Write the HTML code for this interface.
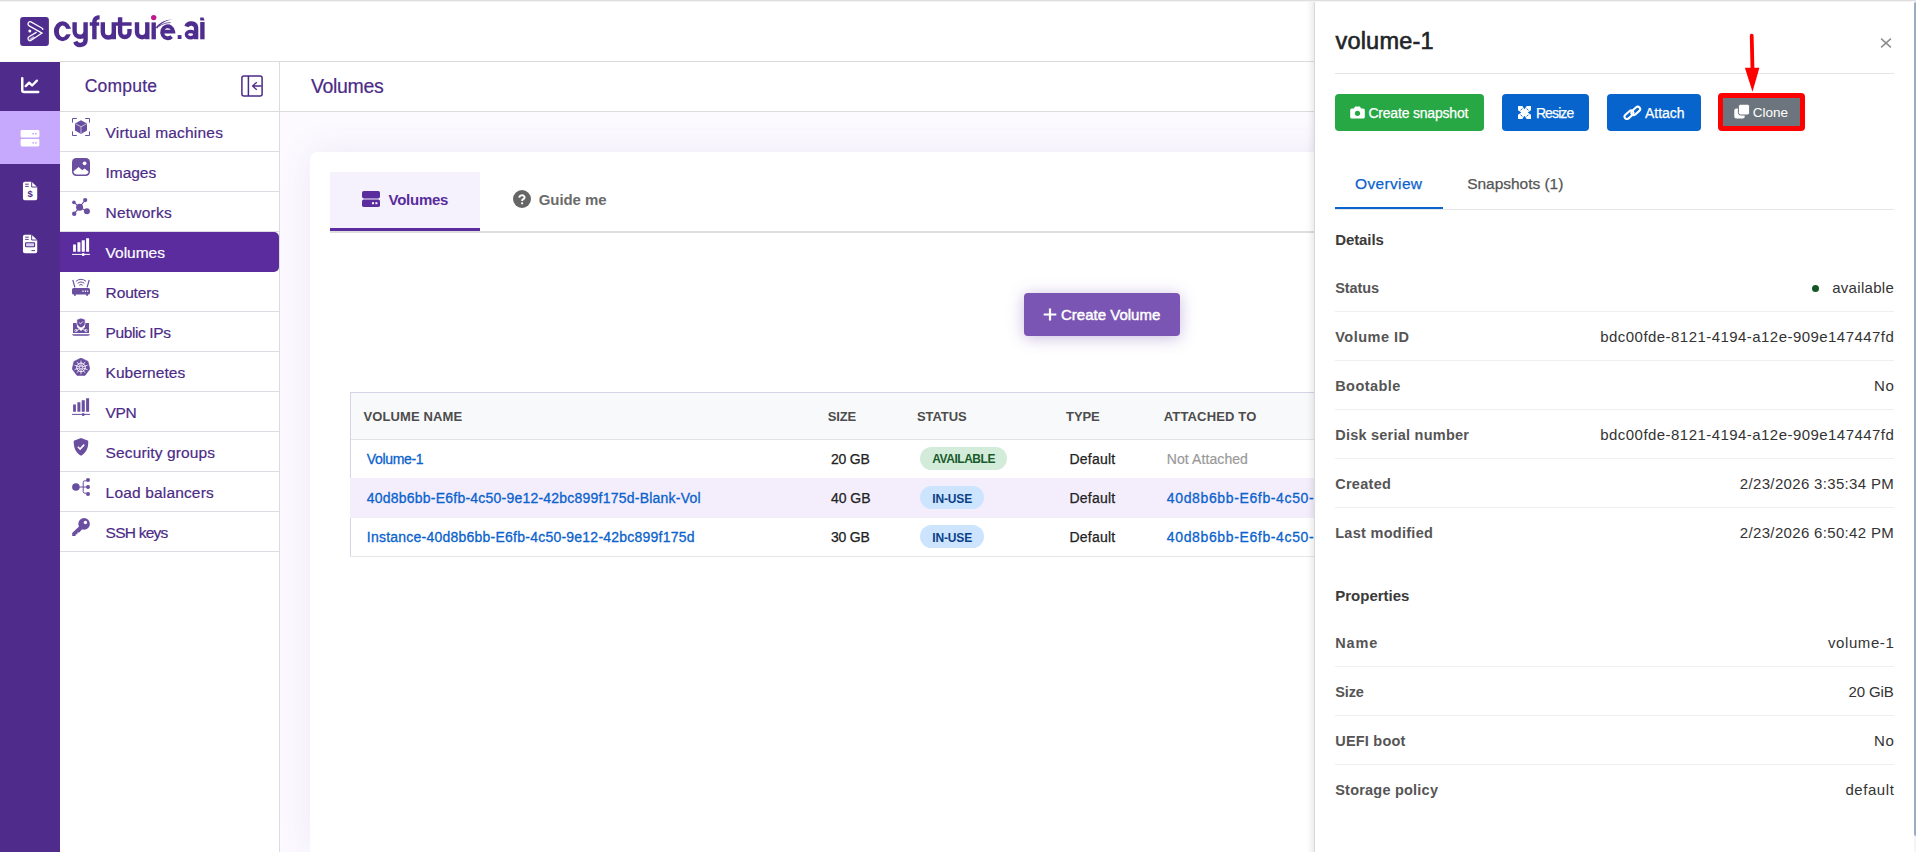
<!DOCTYPE html>
<html lang="en">
<head>
<meta charset="utf-8">
<title>Volumes - cyfuture.ai</title>
<style>
*{box-sizing:border-box;margin:0;padding:0}
html,body{width:1916px;height:852px;overflow:hidden;background:#fff}
body{font-family:"Liberation Sans",sans-serif;position:relative;color:#4c2b87}
.abs,.t,svg.i{position:absolute}
.t{white-space:pre;display:block}
a.t{text-decoration:none}
#topline{left:0;top:0;width:1916px;height:1px;background:#dedfdd;border-bottom:0;box-shadow:0 1px 0 #f4f4f4}
#topbar{left:0;top:0;width:1916px;height:62px;background:#fff;border-bottom:1px solid #dcdcde}
#rail{left:0;top:62px;width:60px;height:790px;background:#4f2c8b}
#railact{left:0;top:111px;width:60px;height:53px;background:#c6a8fd}
#side{left:60px;top:62px;width:220px;height:790px;background:#fff;border-right:1px solid #dcdcde}
#sidehead{left:60px;top:62px;width:219px;height:50px;border-bottom:1px solid #dcdcde}
.srow{position:absolute;left:60px;width:219px;height:40px;border-bottom:1px solid #dddbe4}
.srow.act{background:#5a2c9d;border-bottom:none;border-radius:0 5px 5px 0;height:40px}
#mainhead{left:280px;top:62px;width:1636px;height:50px;background:#fff;border-bottom:1px solid #dcdcde}
#mainbg{left:280px;top:112px;width:1636px;height:740px;background:#fcfaff}
#card{left:310px;top:152px;width:1606px;height:700px;background:#fff;border-radius:8px 0 0 0;box-shadow:0 0 36px rgba(90,60,160,.09)}
#tabact{left:330px;top:172px;width:150px;height:56px;background:#f5f1fd}
#tabul{left:330px;top:228px;width:150px;height:3px;background:#5a2c9d}
#tabline{left:330px;top:231px;width:1586px;height:2px;background:#dedede}
#cbtn{left:1024px;top:293px;width:156px;height:43px;background:#7b55b4;border-radius:4px;box-shadow:0 2px 16px rgba(105,70,170,.36)}
#tbl{left:350px;top:392px;width:1566px;height:165px;border:1px solid #d8d2e8;border-bottom-color:#e6e6e8;border-right:none;background:#fff}
#thead{left:351px;top:393px;width:1565px;height:46px;background:#f8f9fa}
.hl{position:absolute;left:351px;width:1565px;height:1px;background:#e3e3e6}
#row2{left:350px;top:478px;width:1566px;height:39.5px;background:#f4eefc}
.badge{position:absolute;height:23px;border-radius:12px}
#panelshadow{left:1306px;top:2px;width:8px;height:850px;background:linear-gradient(to right,rgba(0,0,0,0),rgba(0,0,0,.025) 45%,rgba(0,0,0,.075))}
#panel{left:1314px;top:2px;width:602px;height:850px;background:#fff;border-left:1px solid #d9d9dc}
.pl{position:absolute;left:1335px;width:559px;height:1px;background:#efefef}
.btn{position:absolute;top:94px;height:37px;border-radius:4px}
#sbt{left:1914px;top:2px;width:2px;height:850px;background:#f4f5f9}
#sb{left:1913.8px;top:2px;width:2.2px;height:833.5px;background:#9dabc2;border-radius:2px 0 0 2px}
</style>
</head>
<body>
<header>
<div class="abs" id="topbar"></div>
<div class="abs" id="topline"></div>
<div class="abs" style="left:0;top:61px;width:60px;height:1px;background:#f7f7f3"></div>
<svg class="i" style="left:0px;top:0px" width="220" height="60" viewBox="0 0 220 60" >
<rect x="20.1" y="16.9" width="28.8" height="29" rx="3" fill="#4f2d8e"/>
<path d="M29.2 38.9 L33.6 36.1 L35 38 L30.6 40.6 A2.1 2.1 0 0 1 29.2 38.9z" fill="#bfa8e4"/>
<path d="M42.7 29.9 V28.5 L31 21.9 A2.2 2.2 0 0 0 29.2 25.9 L42 33.1 L30.6 40.7 A2.15 2.15 0 0 1 28.7 37 L36.6 32.1" stroke="#fff" stroke-width="1.25" fill="none" stroke-linejoin="miter"/>
<circle cx="29.8" cy="31.1" r="1.5" fill="#fff"/>
<g fill="none" stroke="#4f2d8e" stroke-width="4.4">
<path d="M74.6 22.3 V31.3 A5.5 5.5 0 0 0 85.6 31.3 M85.6 22.3 V39.8 A5.4 5.4 0 0 1 75.2 41.6"/>
<path d="M94.4 39.3 V21.6 A4.2 4.2 0 0 1 98.6 17.4 H99.6"/>
<path d="M102.8 22.2 V32 A5.5 5.5 0 0 0 113.8 32 M113.8 22.2 V39.3"/>
<path d="M120.1 17.2 V32.3 A4.7 4.7 0 0 0 129.5 32.3 V29"/>
<path d="M137 22.2 V32.1 A5.15 5.15 0 0 0 147.3 32.1 M147.3 22.2 V39.3"/>
<path d="M153.7 22.4 V39.3"/>
<path d="M162.2 31.6 H173.3 A5.6 6 0 1 0 171.6 36.6" stroke-width="3.8"/>
<path d="M186.4 26.6 A5 4.6 0 0 1 196.1 27.6 V39.3" />
<ellipse cx="190.6" cy="34.6" rx="4.2" ry="3.1" stroke-width="3.4"/>
<path d="M202.4 22 V39.3"/>
</g>
<path fill-rule="evenodd" fill="#4f2d8e" d="M53.9 31.25 A8.6 10.05 0 1 0 71.1 31.25 A8.6 10.05 0 1 0 53.9 31.25z M58.9 31.4 A3.85 5.8 0 1 0 66.6 31.4 A3.85 5.8 0 1 0 58.9 31.4z"/><rect x="62.7" y="28.8" width="9.4" height="5.5" fill="#fff"/>
<path d="M89.7 24 H99.2 M116 24 H131.6" stroke="#4f2d8e" stroke-width="3.5" fill="none"/>
<rect x="177.7" y="35.1" width="3.8" height="3.9" fill="#4f2d8e"/>
<path d="M200.2 17.6 L203.4 17.4 L204.6 20.6 L200.2 20.6z" fill="#4f2d8e"/>
<path d="M155.9 27.2 C160 22.4 166 19.4 173.4 19.6 C167 20.2 161.5 22.8 157 28.8z" fill="#4f2d8e"/>
<path d="M158.8 26.4 C162.5 23.8 166.4 22.6 170.6 22.6" stroke="#4f2d8e" stroke-width=".8" fill="none"/>
<circle cx="153.7" cy="17.6" r="2.7" fill="#c2188a"/>
</svg>
</header>
<nav aria-label="sections">
<div class="abs" id="rail"></div>
<div class="abs" id="railact"></div>
<svg class="i" style="left:20px;top:76px" width="21" height="19" viewBox="0 0 21 19" ><path d="M2.25 2.2 V14.3 A1.8 1.8 0 0 0 4.05 16.1 H18.2" stroke="#fff" stroke-width="2.5" fill="none" stroke-linecap="round"/><path d="M5.7 10.1 L9.2 6.7 L12.1 9.5 L16.9 4.7" stroke="#fff" stroke-width="2.4" fill="none" stroke-linecap="round" stroke-linejoin="round"/></svg><svg class="i" style="left:20px;top:129px" width="20" height="19" viewBox="0 0 20 19" ><rect x=".6" y="1" width="18.8" height="7.4" rx="1.4" fill="#fff"/><rect x=".6" y="10.1" width="18.8" height="7.4" rx="1.4" fill="#fff"/><g fill="#c4a6fb"><circle cx="13.2" cy="4.7" r=".9"/><circle cx="15.9" cy="4.7" r=".9"/><circle cx="13.2" cy="13.8" r=".9"/><circle cx="15.9" cy="13.8" r=".9"/></g></svg><svg class="i" style="left:22px;top:181.3px" width="16.8" height="20" viewBox="0 0 16 20" preserveAspectRatio="none" aria-hidden="true"><path d="M2.6 .7 H9.2 L14.5 6 V17.6 A1.7 1.7 0 0 1 12.8 19.3 H2.6 A1.7 1.7 0 0 1 .9 17.6 V2.4 A1.7 1.7 0 0 1 2.6 .7z" fill="#fff"/><path d="M9.2 .7 V6 H14.5" fill="none" stroke="#4f2c8b" stroke-width=".9"/><path d="M3 3.2 H6.4 M3 5.4 H6.4" stroke="#4f2c8b" stroke-width=".9"/><text x="7.7" y="16.2" font-size="9" font-weight="700" text-anchor="middle" fill="#4f2c8b" font-family="Liberation Sans">$</text></svg><svg class="i" style="left:22px;top:233.9px" width="16.8" height="20" viewBox="0 0 16 20" preserveAspectRatio="none"><path d="M2.6 .7 H9.2 L14.5 6 V17.6 A1.7 1.7 0 0 1 12.8 19.3 H2.6 A1.7 1.7 0 0 1 .9 17.6 V2.4 A1.7 1.7 0 0 1 2.6 .7z" fill="#fff"/><path d="M9.2 .7 V6 H14.5" fill="none" stroke="#4f2c8b" stroke-width=".9"/><path d="M3 3.2 H6.4 M3 5.4 H6.4 M9 16.6 H12.4" stroke="#4f2c8b" stroke-width=".9"/><rect x="3.4" y="8.8" width="8.6" height="4" rx=".6" fill="#d9cdf0" stroke="#4f2c8b" stroke-width="1"/></svg>
</nav>
<nav aria-label="compute">
<div class="abs" id="side"></div>
<div class="abs" id="sidehead"></div>
<span class="t" style="top:74.91px;font-size:17.5px;line-height:22px;left:84.70px;letter-spacing:0.212px;color:#4c2b87;-webkit-text-stroke:.2px #4c2b87;">Compute</span>
<svg class="i" style="left:241px;top:75px" width="22" height="22" viewBox="0 0 22 22" ><rect x=".9" y=".9" width="20.2" height="20.2" rx="2" fill="none" stroke="#4c2b87" stroke-width="1.5"/><path d="M7.4 1 V21" stroke="#4c2b87" stroke-width="1.5"/><path d="M20.6 11 H11.8 M15.8 7.2 L11.6 11 L15.8 14.8" stroke="#4c2b87" stroke-width="1.3" fill="none"/></svg>
<div class="srow" style="top:112px"></div><svg class="i" style="left:72px;top:118px" width="18" height="18" viewBox="0 0 18 18" ><path d="M.5 4.6 V.5 H4.8 M13.2 .5 H17.5 V4.6 M17.5 13.4 V17.5 H13.2 M4.8 17.5 H.5 V13.4" fill="none" stroke="#6a4ea0" stroke-width="1"/><path d="M9 2.2 L15 5.4 V12.6 L9 16 L3 12.6 V5.4z" fill="#6a4ea0"/><path d="M3.4 5.8 L9 8.8 L14.6 5.8 M9 8.8 V15.6" stroke="#fff" stroke-width=".8" fill="none" opacity=".75"/></svg><a class="t" style="top:122.91px;font-size:15.5px;line-height:19px;left:105.60px;letter-spacing:0.199px;color:#4c2b87;-webkit-text-stroke:.2px #4c2b87;">Virtual machines</a>
<div class="srow" style="top:152px"></div><svg class="i" style="left:72px;top:158px" width="18" height="18" viewBox="0 0 18 18" ><rect x="0" y="0" width="18" height="18" rx="4.2" fill="#6a4ea0"/><circle cx="12.6" cy="5.3" r="1.9" fill="#fff"/><path d="M1.3 13.6 L6.6 8.9 L10.3 12.3 L12.6 10.6 L16.7 13.8 A3.2 3.2 0 0 1 13.8 16.4 H4.2 A3.2 3.2 0 0 1 1.3 13.6z" fill="#fff"/></svg><a class="t" style="top:162.91px;font-size:15.5px;line-height:19px;left:105.60px;letter-spacing:-0.057px;color:#4c2b87;-webkit-text-stroke:.2px #4c2b87;">Images</a>
<div class="srow" style="top:192px"></div><svg class="i" style="left:72px;top:198px" width="18" height="18" viewBox="0 0 18 18" ><path d="M7.6 9.2 L13.2 2 M7.6 9.2 L1.9 4.4 M7.6 9.2 L14.9 13.2 M7.6 9.2 L2.1 15.8" stroke="#6a4ea0" stroke-width="1.1"/><circle cx="7.6" cy="9.2" r="3.5" fill="#6a4ea0"/><circle cx="13.2" cy="2.1" r="2.1" fill="#6a4ea0"/><circle cx="1.9" cy="4.4" r="1.8" fill="#6a4ea0"/><circle cx="14.9" cy="13.2" r="3" fill="#6a4ea0"/><circle cx="2.2" cy="15.8" r="2.2" fill="#6a4ea0"/></svg><a class="t" style="top:202.91px;font-size:15.5px;line-height:19px;left:105.60px;letter-spacing:0.211px;color:#4c2b87;-webkit-text-stroke:.2px #4c2b87;">Networks</a>
<div class="srow act" style="top:232px"></div><svg class="i" style="left:72px;top:238px" width="18" height="18" viewBox="0 0 18 18" ><path d="M1.1 6.4 H3.9 V13.7 H1.1z M5.4 4.2 H8.4 V13.7 H5.4z M9.7 2.2 H12.8 V13.7 H9.7z M14.1 .3 H17.1 V13.7 H14.1z" fill="#fff"/><path d="M0 16.4 H18" stroke="#fff" stroke-width="1"/><circle cx="11.2" cy="16.4" r="1.5" fill="#fff"/></svg><a class="t" style="top:242.91px;font-size:15.5px;line-height:19px;left:105.60px;letter-spacing:-0.022px;color:#fff;-webkit-text-stroke:.2px #fff;">Volumes</a>
<div class="srow" style="top:272px"></div><svg class="i" style="left:72px;top:278px" width="18" height="18" viewBox="0 0 18 18" ><rect x="0" y="10" width="18" height="6.6" rx="1.6" fill="#6a4ea0"/><path d="M2 16 V17.8 H3.8 V16 M14.2 16 V17.8 H16 V16" fill="#6a4ea0"/><path d="M.8 2 L2.9 9.4 M17.2 2 L15.1 9.4" stroke="#6a4ea0" stroke-width="1.2"/><path d="M3.9 3.4 A7.3 7.3 0 0 1 14.1 3.4 M5.6 5.4 A4.9 4.9 0 0 1 12.4 5.4 M7.2 7.3 A2.6 2.6 0 0 1 10.8 7.3" fill="none" stroke="#6a4ea0" stroke-width="1"/><path d="M10.4 13.3 H11.6 M12.9 13.3 H14.1 M15.2 13.3 H16.2" stroke="#fff" stroke-width="1.6"/></svg><a class="t" style="top:282.91px;font-size:15.5px;line-height:19px;left:105.60px;letter-spacing:-0.140px;color:#4c2b87;-webkit-text-stroke:.2px #4c2b87;">Routers</a>
<div class="srow" style="top:312px"></div><svg class="i" style="left:72px;top:318px" width="18" height="18" viewBox="0 0 18 18" ><path d="M1 5 H5 V9 L9 13 L13 9 V5 H17 V14.9 H1z" fill="#6a4ea0"/><path d="M0 16.3 H18 A2 1.6 0 0 1 16 17.7 H2 A2 1.6 0 0 1 0 16.3z" fill="#6a4ea0"/><path d="M9 0 L13.2 1.5 V5 C13.2 7.4 11.4 9 9 9.9 C6.6 9 4.8 7.4 4.8 5 V1.5z" fill="#6a4ea0" stroke="#fff" stroke-width=".7"/><path d="M7.2 4.6 L8.5 5.9 L10.9 3.5" stroke="#fff" stroke-width=".9" fill="none"/><path d="M4 12.6 L7.2 11.4 M14 12.6 L10.8 11.4" stroke="#fff" stroke-width=".8"/><circle cx="4" cy="12.6" r="1.2" fill="none" stroke="#fff" stroke-width=".7"/><circle cx="14" cy="12.6" r="1.2" fill="none" stroke="#fff" stroke-width=".7"/></svg><a class="t" style="top:322.91px;font-size:15.5px;line-height:19px;left:105.60px;letter-spacing:-0.402px;color:#4c2b87;-webkit-text-stroke:.2px #4c2b87;">Public IPs</a>
<div class="srow" style="top:352px"></div><svg class="i" style="left:72px;top:358px" width="18" height="18" viewBox="0 0 18 18" ><path d="M9 0 L16 3.4 L17.8 11 L13 17.4 H5 L.2 11 L2 3.4z" fill="#6a4ea0" stroke="#6a4ea0" stroke-width=".6" stroke-linejoin="round"/><circle cx="9" cy="9.4" r="4.3" fill="none" stroke="#fff" stroke-width="1"/><path d="M9 2.6 V16.2 M2.5 7.2 L15.5 11.6 M2.5 11.6 L15.5 7.2 M4.9 3.9 L13.1 14.9 M13.1 3.9 L4.9 14.9" stroke="#fff" stroke-width=".8"/><circle cx="9" cy="9.4" r="1.5" fill="#6a4ea0" stroke="#fff" stroke-width=".7"/></svg><a class="t" style="top:362.91px;font-size:15.5px;line-height:19px;left:105.60px;letter-spacing:0.032px;color:#4c2b87;-webkit-text-stroke:.2px #4c2b87;">Kubernetes</a>
<div class="srow" style="top:392px"></div><svg class="i" style="left:72px;top:398px" width="18" height="18" viewBox="0 0 18 18" ><path d="M1.1 6.4 H3.9 V13.7 H1.1z M5.4 4.2 H8.4 V13.7 H5.4z M9.7 2.2 H12.8 V13.7 H9.7z M14.1 .3 H17.1 V13.7 H14.1z" fill="#6a4ea0"/><path d="M0 16.4 H18" stroke="#6a4ea0" stroke-width="1"/><circle cx="11.2" cy="16.4" r="1.5" fill="#6a4ea0"/></svg><a class="t" style="top:402.91px;font-size:15.5px;line-height:19px;left:105.60px;letter-spacing:-0.425px;color:#4c2b87;-webkit-text-stroke:.2px #4c2b87;">VPN</a>
<div class="srow" style="top:432px"></div><svg class="i" style="left:72px;top:438px" width="18" height="18" viewBox="0 0 18 18" ><path d="M9 0 L16.2 2.8 C16.6 9 14.6 14.6 9 17.8 C3.4 14.6 1.4 9 1.8 2.8z" fill="#6a4ea0"/><path d="M5.9 8.8 L8.1 11 L12.2 6.6" stroke="#fff" stroke-width="1.6" fill="none"/></svg><a class="t" style="top:442.91px;font-size:15.5px;line-height:19px;left:105.60px;letter-spacing:0.120px;color:#4c2b87;-webkit-text-stroke:.2px #4c2b87;">Security groups</a>
<div class="srow" style="top:472px"></div><svg class="i" style="left:72px;top:478px" width="18" height="18" viewBox="0 0 18 18" ><circle cx="3.9" cy="9" r="3.8" fill="#6a4ea0"/><path d="M7 9 H14.6 M14.6 2.8 H12.8 A1.6 1.6 0 0 0 11.2 4.4 V13.6 A1.6 1.6 0 0 0 12.8 15.2 H14.6" fill="none" stroke="#6a4ea0" stroke-width="1"/><circle cx="16" cy="2.1" r="2" fill="#6a4ea0"/><circle cx="16" cy="9" r="2" fill="#6a4ea0"/><circle cx="16" cy="15.9" r="2" fill="#6a4ea0"/></svg><a class="t" style="top:482.91px;font-size:15.5px;line-height:19px;left:105.60px;letter-spacing:0.164px;color:#4c2b87;-webkit-text-stroke:.2px #4c2b87;">Load balancers</a>
<div class="srow" style="top:512px"></div><svg class="i" style="left:72px;top:518px" width="18" height="18" viewBox="0 0 18 18" ><circle cx="12.1" cy="5.9" r="5.8" fill="#6a4ea0"/><path d="M8.6 7 L0.2 15 V18 H3.6 V16.2 H5.4 V14.4 H7.2 L10.8 10.6z" fill="#6a4ea0"/><circle cx="13.4" cy="4.5" r="1.7" fill="#fff"/></svg><a class="t" style="top:522.91px;font-size:15.5px;line-height:19px;left:105.60px;letter-spacing:-0.758px;color:#4c2b87;-webkit-text-stroke:.2px #4c2b87;">SSH keys</a>
</nav>
<main>
<div class="abs" id="mainhead"></div>
<div class="abs" id="mainbg"></div>
<div class="abs" id="card"></div>
<h1 class="t" style="top:73.92px;font-size:19.5px;line-height:24px;left:310.90px;letter-spacing:-0.314px;color:#4c2b87;font-weight:400;-webkit-text-stroke:.2px #4c2b87;">Volumes</h1>
<div class="abs" id="tabact"></div><div class="abs" id="tabline"></div><div class="abs" id="tabul"></div>
<svg class="i" style="left:362px;top:191px" width="18" height="16" viewBox="0 0 18 16" ><rect x="0" y="0" width="18" height="7.4" rx="1.8" fill="#5a2c9d"/><rect x="0" y="8.6" width="18" height="7.4" rx="1.8" fill="#5a2c9d"/><rect x="10" y="11.2" width="2" height="2" fill="#fff"/><rect x="13.4" y="11.2" width="2" height="2" fill="#fff"/></svg><svg class="i" style="left:512.7px;top:190px" width="18" height="18" viewBox="0 0 18 18" ><circle cx="9" cy="9" r="9" fill="#666"/><path d="M6.4 7.6 A2.6 2.1 0 1 1 10.2 9.2 C9.3 9.7 9.1 10 9.1 10.9" stroke="#fff" stroke-width="1.9" fill="none"/><circle cx="9.1" cy="13.3" r="1.15" fill="#fff"/></svg><span class="t" style="top:190.42px;font-size:15px;line-height:19px;left:388.50px;letter-spacing:-0.244px;font-weight:700;color:#582c9c;">Volumes</span>
<span class="t" style="top:190.42px;font-size:15px;line-height:19px;left:538.70px;letter-spacing:-0.070px;font-weight:700;color:#6b6b6b;">Guide me</span>
<div class="abs" id="cbtn"></div><svg class="i" style="left:1043px;top:308px" width="14" height="13" viewBox="0 0 14 13" ><path d="M7 .4 V12.6 M.7 6.5 H13.3" stroke="#fff" stroke-width="2.2"/></svg><span class="t" style="top:304.81px;font-size:15px;line-height:19px;left:1061.00px;letter-spacing:0.005px;color:#fff;-webkit-text-stroke:.45px #fff;">Create Volume</span>
<div class="abs" id="tbl"></div><div class="abs" id="thead"></div><div class="abs" id="row2"></div>
<div class="hl" style="top:439px"></div><span class="t" style="top:409.00px;font-size:13px;line-height:16px;left:363.60px;letter-spacing:0.100px;font-weight:700;color:#4c4c4c;">VOLUME NAME</span>
<span class="t" style="top:409.00px;font-size:13px;line-height:16px;left:827.70px;letter-spacing:-0.102px;font-weight:700;color:#4c4c4c;">SIZE</span>
<span class="t" style="top:409.00px;font-size:13px;line-height:16px;left:917.00px;letter-spacing:-0.096px;font-weight:700;color:#4c4c4c;">STATUS</span>
<span class="t" style="top:409.00px;font-size:13px;line-height:16px;left:1066.10px;letter-spacing:-0.117px;font-weight:700;color:#4c4c4c;">TYPE</span>
<span class="t" style="top:409.00px;font-size:13px;line-height:16px;left:1163.80px;letter-spacing:0.145px;font-weight:700;color:#4c4c4c;">ATTACHED TO</span>
<a class="t" style="top:450.01px;font-size:14px;line-height:18px;left:366.80px;letter-spacing:-0.345px;color:#0a62cc;-webkit-text-stroke:.3px #0a62cc;">Volume-1</a>
<span class="t" style="top:450.01px;font-size:14px;line-height:18px;left:831.00px;letter-spacing:-0.201px;color:#222;-webkit-text-stroke:.25px #222;">20 GB</span>
<div class="badge" style="left:920px;top:447px;width:87px;background:#d3ecda"></div><span class="t" style="top:452.41px;font-size:12px;line-height:15px;left:932.20px;letter-spacing:-0.455px;font-weight:700;color:#185a2a;">AVAILABLE</span>
<span class="t" style="top:450.01px;font-size:14px;line-height:18px;left:1069.40px;letter-spacing:0.234px;color:#222;-webkit-text-stroke:.25px #222;">Default</span>
<span class="t" style="top:450.01px;font-size:14px;line-height:18px;left:1166.80px;letter-spacing:0.086px;color:#999;-webkit-text-stroke:.2px #999;">Not Attached</span>
<a class="t" style="top:489.15px;font-size:14px;line-height:18px;left:366.80px;letter-spacing:0.221px;color:#0a62cc;-webkit-text-stroke:.3px #0a62cc;">40d8b6bb-E6fb-4c50-9e12-42bc899f175d-Blank-Vol</a>
<span class="t" style="top:489.15px;font-size:14px;line-height:18px;left:831.00px;letter-spacing:-0.041px;color:#222;-webkit-text-stroke:.25px #222;">40 GB</span>
<div class="badge" style="left:920px;top:486px;width:64px;background:#cce4fd"></div><span class="t" style="top:491.57px;font-size:12px;line-height:15px;left:932.20px;letter-spacing:-0.145px;font-weight:700;color:#0a3f86;">IN-USE</span>
<span class="t" style="top:489.15px;font-size:14px;line-height:18px;left:1069.40px;letter-spacing:0.234px;color:#222;-webkit-text-stroke:.25px #222;">Default</span>
<a class="t" style="top:489.15px;font-size:14px;line-height:18px;left:1166.80px;letter-spacing:0.635px;color:#0a62cc;-webkit-text-stroke:.3px #0a62cc;">40d8b6bb-E6fb-4c50-</a>
<a class="t" style="top:528.31px;font-size:14px;line-height:18px;left:366.80px;letter-spacing:0.232px;color:#0a62cc;-webkit-text-stroke:.3px #0a62cc;">Instance-40d8b6bb-E6fb-4c50-9e12-42bc899f175d</a>
<span class="t" style="top:528.31px;font-size:14px;line-height:18px;left:831.00px;letter-spacing:-0.201px;color:#222;-webkit-text-stroke:.25px #222;">30 GB</span>
<div class="badge" style="left:920px;top:525px;width:64px;background:#cce4fd"></div><span class="t" style="top:530.71px;font-size:12px;line-height:15px;left:932.20px;letter-spacing:-0.145px;font-weight:700;color:#0a3f86;">IN-USE</span>
<span class="t" style="top:528.31px;font-size:14px;line-height:18px;left:1069.40px;letter-spacing:0.234px;color:#222;-webkit-text-stroke:.25px #222;">Default</span>
<a class="t" style="top:528.31px;font-size:14px;line-height:18px;left:1166.80px;letter-spacing:0.635px;color:#0a62cc;-webkit-text-stroke:.3px #0a62cc;">40d8b6bb-E6fb-4c50-</a>
</main>
<aside>
<div class="abs" id="panelshadow"></div><div class="abs" id="panel"></div>
<h2 class="t" style="top:27.30px;font-size:23.5px;line-height:29px;left:1335.50px;letter-spacing:0.193px;color:#212529;font-weight:400;-webkit-text-stroke:.6px #212529;">volume-1</h2>
<svg class="i" style="left:1879.6px;top:37.4px" width="12" height="12" viewBox="0 0 12 12" ><path d="M1.1 1.6 L10.9 10.4 M10.9 1.6 L1.1 10.4" stroke="#8c8c8c" stroke-width="1.5"/></svg><div class="pl" style="top:73px;background:#e4e4e4"></div>
<div class="btn" style="left:1335px;width:149px;background:#28a745"></div><svg class="i" style="left:1350px;top:106px" width="15" height="13" viewBox="0 0 15 13" ><path d="M1.8 2.4 H4 L5 .5 H10 L11 2.4 H13.2 A1.6 1.6 0 0 1 14.8 4 V11 A1.6 1.6 0 0 1 13.2 12.6 H1.8 A1.6 1.6 0 0 1 .2 11 V4 A1.6 1.6 0 0 1 1.8 2.4z" fill="#fff"/><circle cx="7.5" cy="7.3" r="2.6" fill="#28a745"/></svg><span class="t" style="top:104.01px;font-size:14px;line-height:18px;left:1368.40px;letter-spacing:-0.196px;color:#fff;-webkit-text-stroke:.25px #fff;">Create snapshot</span>
<div class="btn" style="left:1502px;width:87px;background:#0664cc"></div><svg class="i" style="left:1518px;top:106px" width="13" height="13" viewBox="0 0 13 13" ><path d="M0 0 H4.3 L6.5 3.3 L8.7 0 H13 V4.3 L9.7 6.5 L13 8.7 V13 H8.7 L6.5 9.7 L4.3 13 H0 V8.7 L3.3 6.5 L0 4.3z" fill="#fff"/><path d="M2.5 4.4 L4.4 2.5 M10.5 4.4 L8.6 2.5 M2.5 8.6 L4.4 10.5 M10.5 8.6 L8.6 10.5" stroke="#0664cc" stroke-width=".9"/></svg><span class="t" style="top:104.01px;font-size:14px;line-height:18px;left:1535.90px;letter-spacing:-0.883px;color:#fff;-webkit-text-stroke:.25px #fff;">Resize</span>
<div class="btn" style="left:1607px;width:94px;background:#0664cc"></div><svg class="i" style="left:1623px;top:105px" width="19" height="15" viewBox="0 0 19 15" ><g fill="none" stroke="#fff" stroke-width="2.1"><rect x=".9" y="7.4" width="10.2" height="4.8" rx="2.4" transform="rotate(-42 6 9.8)"/><rect x="7.6" y="3.5" width="10.2" height="4.8" rx="2.4" transform="rotate(-42 12.7 5.9)"/></g></svg><span class="t" style="top:104.01px;font-size:14px;line-height:18px;left:1645.00px;letter-spacing:-0.034px;color:#fff;-webkit-text-stroke:.25px #fff;">Attach</span>
<div class="abs" style="left:1718px;top:93px;width:87px;height:38px;background:#6c757d;border:5px solid #fe0000;border-radius:4px"></div><svg class="i" style="left:1733.5px;top:104px" width="16" height="15" viewBox="0 0 16 15" ><rect x=".3" y="4.4" width="10.4" height="10.2" rx="2" fill="#fff"/><rect x="4.4" y=".2" width="11.2" height="10.8" rx="2.2" fill="#fff" stroke="#6c757d" stroke-width="1"/></svg><span class="t" style="top:103.62px;font-size:13.5px;line-height:17px;left:1752.80px;letter-spacing:-0.016px;color:#fff;">Clone</span>
<svg class="i" style="left:1740px;top:30px" width="26" height="64" viewBox="0 0 26 64" ><path d="M11.7 5.6 L12.5 40" stroke="#fe0000" stroke-width="3.8" stroke-linecap="round"/><path d="M4.9 37.8 L19.4 37.8 L12.5 61.8z" fill="#fe0000"/></svg><span class="t" style="top:174.00px;font-size:15.5px;line-height:19px;left:1355.00px;letter-spacing:0.349px;color:#0b63ce;-webkit-text-stroke:.25px #0b63ce;">Overview</span><span class="t" style="top:174.00px;font-size:15.5px;line-height:19px;left:1467.20px;letter-spacing:-0.031px;color:#555;-webkit-text-stroke:.25px #555;">Snapshots (1)</span>
<div class="pl" style="top:209px;background:#e6e6e6"></div><div class="abs" style="left:1335px;top:207px;width:108px;height:2px;background:#0b63ce"></div>
<span class="t" style="top:230.01px;font-size:15px;line-height:19px;left:1335.30px;letter-spacing:-0.115px;font-weight:700;color:#3a3a3a;">Details</span>
<span class="t" style="top:278.51px;font-size:14.5px;line-height:18px;left:1335.20px;letter-spacing:-0.071px;font-weight:700;color:#555;">Status</span><span class="t" style="top:277.51px;font-size:15px;line-height:19px;right:21.89px;letter-spacing:0.309px;color:#333;">available</span>
<div class="pl" style="top:311px"></div><span class="t" style="top:327.60px;font-size:14.5px;line-height:18px;left:1335.20px;letter-spacing:0.497px;font-weight:700;color:#555;">Volume ID</span><span class="t" style="top:326.61px;font-size:15px;line-height:19px;right:21.75px;letter-spacing:0.451px;color:#333;">bdc00fde-8121-4194-a12e-909e147447fd</span>
<div class="pl" style="top:360px"></div><span class="t" style="top:376.70px;font-size:14.5px;line-height:18px;left:1335.20px;letter-spacing:0.434px;font-weight:700;color:#555;">Bootable</span><span class="t" style="top:375.70px;font-size:15px;line-height:19px;right:21.54px;letter-spacing:0.656px;color:#333;">No</span>
<div class="pl" style="top:409px"></div><span class="t" style="top:425.81px;font-size:14.5px;line-height:18px;left:1335.20px;letter-spacing:0.236px;font-weight:700;color:#555;">Disk serial number</span><span class="t" style="top:424.81px;font-size:15px;line-height:19px;right:21.75px;letter-spacing:0.451px;color:#333;">bdc00fde-8121-4194-a12e-909e147447fd</span>
<div class="pl" style="top:458px"></div><span class="t" style="top:474.90px;font-size:14.5px;line-height:18px;left:1335.20px;letter-spacing:0.286px;font-weight:700;color:#555;">Created</span><span class="t" style="top:473.91px;font-size:15px;line-height:19px;right:21.87px;letter-spacing:0.334px;color:#333;">2/23/2026 3:35:34 PM</span>
<div class="pl" style="top:507px"></div><span class="t" style="top:524.01px;font-size:14.5px;line-height:18px;left:1335.20px;letter-spacing:0.287px;font-weight:700;color:#555;">Last modified</span><span class="t" style="top:523.01px;font-size:15px;line-height:19px;right:21.87px;letter-spacing:0.334px;color:#333;">2/23/2026 6:50:42 PM</span>
<div class="abs" style="left:1812px;top:285px;width:7px;height:7px;border-radius:50%;background:#155724"></div>
<span class="t" style="top:585.70px;font-size:15px;line-height:19px;left:1335.30px;letter-spacing:-0.020px;font-weight:700;color:#3a3a3a;">Properties</span>
<span class="t" style="top:634.20px;font-size:14.5px;line-height:18px;left:1335.20px;letter-spacing:0.875px;font-weight:700;color:#555;">Name</span><span class="t" style="top:633.20px;font-size:15px;line-height:19px;right:21.60px;letter-spacing:0.600px;color:#333;">volume-1</span>
<div class="pl" style="top:666px"></div><span class="t" style="top:683.23px;font-size:14.5px;line-height:18px;left:1335.20px;letter-spacing:-0.129px;font-weight:700;color:#555;">Size</span><span class="t" style="top:682.25px;font-size:15px;line-height:19px;right:22.31px;letter-spacing:-0.110px;color:#333;">20 GiB</span>
<div class="pl" style="top:715px"></div><span class="t" style="top:732.26px;font-size:14.5px;line-height:18px;left:1335.20px;letter-spacing:0.226px;font-weight:700;color:#555;">UEFI boot</span><span class="t" style="top:731.28px;font-size:15px;line-height:19px;right:21.54px;letter-spacing:0.656px;color:#333;">No</span>
<div class="pl" style="top:764px"></div><span class="t" style="top:781.29px;font-size:14.5px;line-height:18px;left:1335.20px;letter-spacing:0.220px;font-weight:700;color:#555;">Storage policy</span><span class="t" style="top:780.30px;font-size:15px;line-height:19px;right:21.64px;letter-spacing:0.565px;color:#333;">default</span>
<div class="abs" id="sbt"></div><div class="abs" id="sb"></div>
</aside>
</body>
</html>
